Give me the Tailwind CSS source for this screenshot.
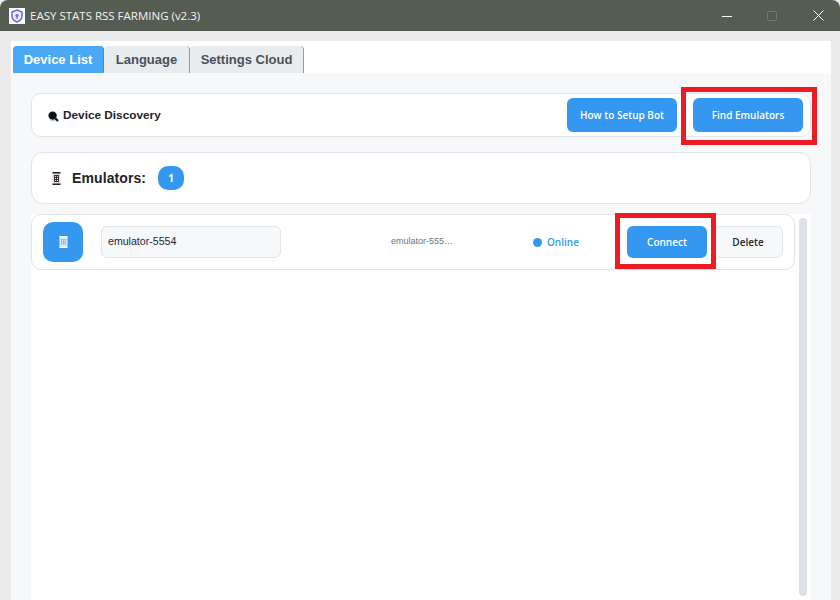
<!DOCTYPE html>
<html lang="en">

<head>
    <meta charset="UTF-8">
    <meta name="viewport" content="width=device-width, initial-scale=1.0">
    <script src="https://cdn.jsdelivr.net/npm/@tailwindcss/browser@4"></script>
    <title>EASY STATS RSS FARMING</title>
</head>

<body class="bg-[#ebebeb]">
    <div class="relative w-[840px] h-[600px] overflow-hidden bg-[#ebebeb] font-['Open_Sans',sans-serif]">
        <!-- title bar -->
        <div class="h-[31px] bg-[#555d52] rounded-t-[8px] flex items-center pl-[9px] text-white">
            <div class="w-4 h-4 bg-white flex items-center justify-center">
                <svg width="14" height="14" viewBox="0 0 14 14" fill="none">
                    <path d="M7 1 L12 3 V7 C12 10 9.5 12 7 13 C4.5 12 2 10 2 7 V3 Z" stroke="#5b6cf0" stroke-width="1.5" fill="#eef0ff" />
                    <circle cx="7" cy="6.5" r="1.6" fill="#5b6cf0" />
                    <rect x="6.4" y="7" width="1.2" height="3" fill="#5b6cf0" />
                </svg>
            </div>
            <span class="ml-[5px] text-[11.5px] text-[#f2f2f2]">EASY STATS RSS FARMING (v2.3)</span>
            <div class="ml-auto flex items-center">
                <svg width="10" height="10" viewBox="0 0 10 10" class="mr-[35px]"><path d="M0 5.5 H10" stroke="#fff" stroke-width="1" /></svg>
                <svg width="10" height="10" viewBox="0 0 10 10" class="mr-[36px]"><rect x="0.5" y="0.5" width="9" height="9" rx="1" fill="none" stroke="#727a6f" stroke-width="1" /></svg>
                <svg width="11" height="11" viewBox="0 0 11 11" class="mr-[16px]"><path d="M0.5 0.5 L10.5 10.5 M10.5 0.5 L0.5 10.5" stroke="#fff" stroke-width="1" /></svg>
            </div>
        </div>

        <!-- main panel -->
        <div class="ml-[11px] mr-[9px] mt-[10px] h-[559px] bg-white flex flex-col">
            <!-- tabs -->
            <div class="flex pt-[5px] pl-[2px] h-[32px] font-bold text-[13px] font-['Liberation_Sans',sans-serif]">
                <div class="w-[91px] h-[27px] pt-[1px] flex items-center justify-center bg-[#4aa8f5] text-white rounded-t-[4px] border-r border-[#3b8fd6]">Device List</div>
                <div class="w-[86px] h-[27px] pt-[1px] flex items-center justify-center bg-[#e9ecef] text-[#495057] rounded-t-[4px] border-r border-[#999]">Language</div>
                <div class="w-[114px] h-[27px] pt-[1px] flex items-center justify-center bg-[#e9ecef] text-[#495057] rounded-t-[4px] border-r border-[#999]">Settings Cloud</div>
            </div>

            <!-- tab content -->
            <div class="flex-1 bg-[#f6f8fa] rounded-tr-[6px] pt-[20px] pl-[20px] pr-[20px]">
                <!-- discovery card -->
                <div class="h-[44px] bg-white border border-[#e1e4e8] rounded-[10px] flex items-center pl-[16px] pr-[7px]">
                    <svg width="11" height="11" viewBox="0 0 11 11" class="mt-[3px]">
                        <circle cx="4.6" cy="4.6" r="4.2" fill="#111" />
                        <path d="M6.5 6.5 L10 10" stroke="#222" stroke-width="2.4" />
                        <path d="M2.5 9 L6.5 9.4" stroke="#4aa8f5" stroke-width="0.8" />
                    </svg>
                    <span class="ml-[4px] mt-[1px] text-[11.8px] font-bold text-[#1f2328] font-['Liberation_Sans',sans-serif]">Device Discovery</span>
                    <button class="ml-auto w-[110px] h-[34px] bg-[#3498f0] text-white text-[10px] font-semibold rounded-[6px]">How to Setup Bot</button>
                    <button class="ml-[16px] w-[110px] h-[34px] bg-[#3498f0] text-white text-[10px] font-semibold rounded-[6px]">Find Emulators</button>
                </div>

                <!-- emulators header -->
                <div class="mt-[15px] h-[52px] bg-white border border-[#e1e4e8] rounded-[12px] flex items-center pl-[20px]">
                    <svg width="9" height="13" viewBox="0 0 9 13">
                        <rect x="0.5" y="0" width="8" height="13" rx="1" fill="#e8d8d8" />
                        <rect x="0.5" y="0" width="8" height="1.5" fill="#222" />
                        <rect x="0.5" y="11.5" width="8" height="1.5" fill="#222" />
                        <path d="M2 3.5 H7 M2 5.5 H7 M2 7.5 H7 M2 9.5 H7 M2.5 3 V10 M4.5 3 V10 M6.5 3 V10" stroke="#333" stroke-width="1" />
                    </svg>
                    <span class="ml-[11px] text-[14px] tracking-[0.1px] font-bold text-[#1f2328] font-['Liberation_Sans',sans-serif]">Emulators:</span>
                    <div class="ml-[12px] w-[26px] h-[24px] bg-[#3498f0] rounded-[10px] flex items-center justify-center text-white text-[10px] font-bold">1</div>
                </div>

                <!-- device list -->
                <div class="mt-[10px] h-[386px] bg-white w-[780px] flex">
                    <div class="w-[764px]">
                        <div class="h-[56px] border border-[#e1e4e8] rounded-[10px] flex items-center pl-[11px]">
                            <div class="w-10 h-10 bg-[#3498f0] rounded-[10px] flex items-center justify-center">
                                <svg width="9" height="12" viewBox="0 0 9 12">
                                    <rect x="0.5" y="0" width="8" height="12" rx="1" fill="#dbeeff" />
                                    <rect x="0.5" y="0" width="8" height="1.3" fill="#fff" />
                                    <rect x="0.5" y="10.7" width="8" height="1.3" fill="#fff" />
                                    <path d="M2 3.5 H7 M2 5.5 H7 M2 7.5 H7 M2.5 3 V9 M4.5 3 V9 M6.5 3 V9" stroke="#7dbdf5" stroke-width="0.8" />
                                </svg>
                            </div>
                            <div class="ml-[18px] w-[180px] h-[32px] bg-[#f6f8fa] border border-[#e1e4e8] rounded-[6px] flex items-center pl-[6px] text-[10.6px] text-[#24292e] font-['Liberation_Sans',sans-serif]">emulator-5554</div>
                            <span class="ml-[110px] w-[64px] text-[9px] text-[#6a737d] font-['Liberation_Sans',sans-serif]">emulator-555…</span>
                            <span class="ml-[78px] w-[9px] h-[9px] rounded-full bg-[#3498f0]"></span>
                            <span class="ml-[5px] w-[34px] text-[10px] font-semibold text-[#3498f0]">Online</span>
                            <button class="ml-[46px] w-[80px] h-[32px] bg-[#3498f0] text-white text-[10px] font-semibold rounded-[6px]">Connect</button>
                            <button class="ml-[6px] w-[70px] h-[32px] bg-[#f6f8fa] border border-[#e1e4e8] text-[#24292e] text-[10px] font-semibold rounded-[6px]">Delete</button>
                        </div>
                    </div>
                    <!-- scrollbar -->
                    <div class="ml-[4px] mt-[4px] w-[8px] h-[378px] bg-[#dee2e6] rounded-[4px]"></div>
                </div>
            </div>
        </div>

        <!-- red highlight boxes -->
        <div class="absolute left-[681px] top-[87px] w-[136px] h-[58px] border-[5px] border-[#ed1c24]"></div>
        <div class="absolute left-[615px] top-[213px] w-[101px] h-[56px] border-[5px] border-[#ed1c24]"></div>
    </div>
</body>

</html>
